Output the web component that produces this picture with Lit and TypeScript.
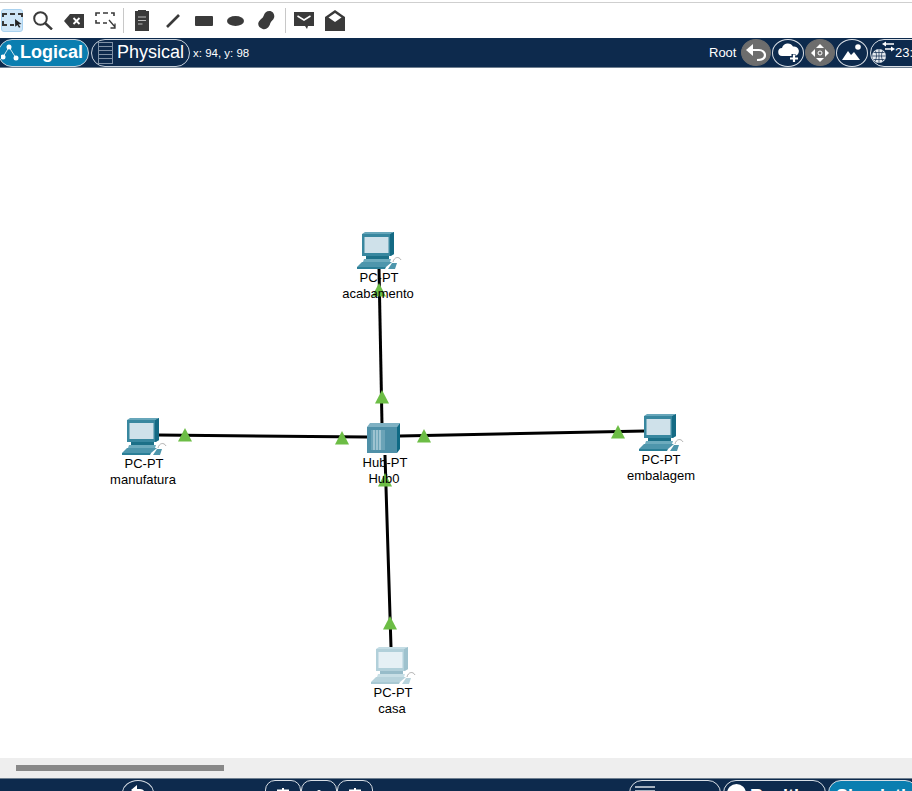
import { LitElement, html, css, svg } from "lit";
import { customElement } from "lit/decorators.js";

const INK = "#3a3a3a";

const pcIcon = (faded: boolean) => {
  const c = faded
    ? { top: "#c4dde5", side: "#9fc2ce", front: "#b2d0da", screen: "#e6f0f5", dark: "#97bcc9", base: "#c8dfe6", key: "#b7d3dc", line: "#a9c9d3" }
    : { top: "#67a6ba", side: "#146a84", front: "#38879f", screen: "#cfe1ea", dark: "#1c7088", base: "#6dabbd", key: "#4e96ac", line: "#2b7f97" };
  return svg`<svg class="pc" viewBox="0 0 45 37" width="45" height="37">
    <path d="M5 2 L33 2 L37 0 V22 L34 24 H5 Z" fill="${c.front}"/>
    <path d="M5 2 H33 L37 0 H8 Z" fill="${c.top}"/>
    <path d="M33 2 L37 0 V22 L33 24 Z" fill="${c.side}"/>
    <rect x="7.5" y="5" width="24" height="16" fill="${c.screen}"/>
    <path d="M9 24 H32 V27 H9 Z" fill="${c.dark}"/>
    <path d="M7 27 H34 L33 30 H6 Z" fill="${c.base}"/>
    <path d="M5 30 H35 L29 35 H0 Z" fill="${c.key}"/>
    <path d="M0 35 H29 L28 37 H0 Z" fill="${c.line}"/>
    <path d="M31 37 L35 31 H40 L38 37 Z" fill="${c.key}"/>
    <path d="M36 30 C37 25 42 24 44 28" fill="none" stroke="#a0a0a0" stroke-width=".8"/>
  </svg>`;
};

const hubIcon = svg`<svg class="hub" viewBox="0 0 33 30" width="33" height="30">
  <path d="M0 4 L3 0 H33 L30 4 Z" fill="#7fb1c3"/>
  <path d="M30 4 L33 0 V26 L30 30 Z" fill="#0f6a85"/>
  <rect x="0" y="4" width="30" height="26" fill="#4f90a8"/>
  <rect x="4" y="7" width="14" height="20" fill="#6ba3b7"/>
  <path d="M7 7 V27 M10 7 V27 M13 7 V27" stroke="#c5dde5" stroke-width="1.1"/>
</svg>`;

const links = [
  [379, 268, 382, 425],
  [158, 435, 367, 437],
  [645, 431, 400, 436],
  [385, 455, 391, 647],
];
const arrows = [
  [379, 290], [385, 480], [382, 397], [390, 623],
  [185, 435], [342, 438], [424, 436], [618, 432],
];

type Node = { x: number; y: number; a: string; b: string; ax: number; ay: number; bx: number; by: number; kind: string };
const nodes: Node[] = [
  { x: 357, y: 232, a: "PC-PT", b: "acabamento", ax: 379, ay: 278, bx: 378, by: 294, kind: "pc" },
  { x: 122, y: 418, a: "PC-PT", b: "manufatura", ax: 144, ay: 464, bx: 143, by: 480, kind: "pc" },
  { x: 639, y: 414, a: "PC-PT", b: "embalagem", ax: 661, ay: 460, bx: 661, by: 476, kind: "pc" },
  { x: 371, y: 647, a: "PC-PT", b: "casa", ax: 393, ay: 693, bx: 392, by: 709, kind: "faded" },
  { x: 367, y: 423, a: "Hub-PT", b: "Hub0", ax: 385, ay: 463, bx: 384, by: 479, kind: "hub" },
];

@customElement("app-root")
export class AppRoot extends LitElement {
  static styles = css`
    :host {
      display: flex;
      flex-direction: column;
      width: 912px;
      height: 791px;
      overflow: hidden;
      background: #fff;
      font-family: "Liberation Sans", Arial, sans-serif;
    }
    .toolbar {
      height: 36px;
      margin-top: 2px;
      border-top: 1px solid #cfcfcf;
      box-sizing: border-box;
      flex: none;
      display: flex;
      align-items: center;
      padding: 0 0 0 1px;
    }
    .tool {
      width: 22px;
      height: 23px;
      margin-right: 9px;
      display: flex;
      align-items: center;
      justify-content: center;
      border-radius: 3px;
      border: 1px solid transparent;
      box-sizing: border-box;
      flex: none;
    }
    .tool.on { background: #cfe6f8; border-color: #a9d2f0; }
    .tool svg { display: block; flex: none; }
    .sep { width: 1px; height: 25px; background: #c8c8c8; margin: 0 7px 0 -2px; flex: none; }
    .sep.second { margin-left: -1px; }
    .nav {
      flex: none;
      height: 30px;
      background: #0d2a4d;
      border-bottom: 1px solid #6f7f90;
      box-sizing: border-box;
      display: flex;
      align-items: center;
      color: #fff;
      white-space: nowrap;
      overflow: hidden;
    }
    .pill {
      height: 28px;
      border: 1px solid #c9d2dc;
      border-radius: 14px;
      box-sizing: border-box;
      display: flex;
      align-items: center;
      flex: none;
      font-size: 18px;
      color: #fff;
    }
    .logical {
      width: 91px;
      margin-left: -2px;
      background: #0a7eb0;
      font-weight: bold;
      padding-left: 2px;
      gap: 1px;
    }
    .physical { width: 99px; margin-left: 2px; padding-left: 6px; gap: 4px; }
    .coords { font-size: 11.5px; margin-left: 3px; }
    .right { margin-left: auto; display: flex; align-items: center; flex: none; width: 203px; }
    .root { font-size: 13px; width: 32px; flex: none; }
    .round {
      width: 32px;
      height: 28px;
      border-radius: 50%;
      border: 1px solid #d8dee5;
      box-sizing: border-box;
      display: flex;
      align-items: center;
      justify-content: center;
      flex: none;
      margin-right: 1px;
    }
    .round.grey { width: 30px; height: 27px; background: #6d6d6d; border-color: #6d6d6d; }
    .round.last { margin-right: 2px; }
    .net {
      width: 60px;
      height: 28px;
      border-radius: 14px;
      border: 1px solid #d8dee5;
      box-sizing: border-box;
      display: flex;
      align-items: center;
      padding-left: 1px;
      gap: 0;
      font-size: 13px;
      flex: none;
    }
    .canvas { flex: none; height: 690px; position: relative; background: #fff; overflow: hidden; }
    .links { position: absolute; inset: 0; }
    .node { position: absolute; display: block; }
    .label {
      position: absolute;
      transform: translate(-50%, -50%);
      font-size: 13px;
      line-height: 14px;
      color: #000;
      white-space: nowrap;
    }
    .scroll {
      flex: none;
      height: 20px;
      background: #eeeeee;
      display: flex;
      align-items: center;
      padding-left: 16px;
    }
    .thumb { width: 208px; height: 6px; background: #888; }
    .bottom {
      flex: 1;
      background: #0d2a4d;
      border-top: 1px solid #6f7f90;
      display: flex;
      align-items: flex-start;
      overflow: hidden;
      padding-top: 1px;
      box-sizing: border-box;
      color: #fff;
    }
    .bbtn {
      flex: none;
      height: 26px;
      border: 1px solid #d8dee5;
      box-sizing: border-box;
      display: flex;
      align-items: flex-start;
      justify-content: center;
      font-size: 18px;
      font-weight: bold;
      line-height: 21px;
    }
    .bbtn span.txt { margin-top: 2px; }
    .undo { width: 32px; border-radius: 50%; margin-left: 122px; padding-top: 4px; }
    .seg { width: 36px; border-radius: 10px; padding-top: 7px; }
    .seg.first { margin-left: 111px; }
    .tab { border-radius: 14px; justify-content: flex-start; }
    .t1 { width: 92px; margin-left: 256px; padding: 5px 0 0 5px; }
    .t2 { width: 103px; margin-left: 2px; padding: 3px 0 0 3px; gap: 4px; }
    .t3 { width: 90px; margin-left: 2px; padding: 3px 0 0 3px; gap: 4px; background: #0a7eb0; }
    .dot { width: 19px; height: 19px; border-radius: 50%; background: #fff; flex: none; }
  `;

  private tool(body: unknown, on = false) {
    return html`<div class="tool ${on ? "on" : ""}">${body}</div>`;
  }

  render() {
    return html`
      <div class="toolbar">
        ${this.tool(svg`<svg width="21" height="15" viewBox="0 0 21 15"><path d="M1 4V1H5M8 1H13M16 1H20V4M1 8V12H5M8 12H12" fill="none" stroke="${INK}" stroke-width="2"/><path d="M13 6l6.500 5-3 .5 2 2.500-1.500 .8-1.600-2.800-2.200 1.800z" fill="#222"/></svg>`, true)}
        ${this.tool(svg`<svg width="20" height="19" viewBox="0 0 20 19"><circle cx="7.500" cy="7.500" r="6.300" fill="none" stroke="${INK}" stroke-width="2"/><path d="M12 12L19 18.500" stroke="${INK}" stroke-width="2.400"/></svg>`)}
        ${this.tool(svg`<svg width="20" height="14" viewBox="0 0 20 14"><path d="M6 0h14v14H6L0 7z" fill="${INK}"/><path d="M9.500 4l6 6M15.500 4l-6 6" stroke="#fff" stroke-width="1.800"/></svg>`)}
        ${this.tool(svg`<svg width="21" height="17" viewBox="0 0 21 17"><path d="M1 4V1H5M8 1H13M16 1H19V4M1 8V11H5M8 11H12" fill="none" stroke="${INK}" stroke-width="1.600"/><path d="M14 8l6 7M20 11.500V16H15.500" fill="none" stroke="${INK}" stroke-width="1.300"/></svg>`)}
        <div class="sep"></div>
        ${this.tool(svg`<svg width="14" height="21" viewBox="0 0 14 21"><path d="M0 1h3V0h8v1h3v20H0z" fill="${INK}"/><path d="M3 7h8M3 10.500h8M3 14h4.500" stroke="#bbb" stroke-width="1.200"/></svg>`)}
        ${this.tool(svg`<svg width="14" height="14" viewBox="0 0 14 14"><path d="M1 13L13 1" stroke="${INK}" stroke-width="2.600"/></svg>`)}
        ${this.tool(svg`<svg width="18" height="10" viewBox="0 0 18 10"><rect width="18" height="10" rx="1" fill="${INK}"/></svg>`)}
        ${this.tool(svg`<svg width="17" height="10" viewBox="0 0 17 10"><ellipse cx="8.500" cy="5" rx="8.500" ry="5" fill="${INK}"/></svg>`)}
        ${this.tool(svg`<svg width="17" height="19" viewBox="0 0 18 20"><path d="M12 0c4 0 6 4 5 7-1 3-3 3-4 6-1 4-4 7-8 6-4-1-6-5-4-8 2-3 4-3 5-6 1-3 3-5 6-5z" fill="${INK}"/></svg>`)}
        <div class="sep second"></div>
        ${this.tool(svg`<svg width="20" height="17" viewBox="0 0 20 17"><path d="M0 0h20v14h-6l-1 3-2-3H0z" fill="${INK}"/><path d="M3.500 4l6.500 4 6.500-4" fill="none" stroke="#fff" stroke-width="1.500"/></svg>`)}
        ${this.tool(svg`<svg width="20" height="21" viewBox="0 0 20 21"><path d="M0 7L10 0l10 7v14H0z" fill="${INK}"/><path d="M3.500 7.500L10 12l6.500-4.500L10 3z" fill="#fff"/></svg>`)}
      </div>

      <div class="nav">
        <div class="pill logical">
          <svg width="18" height="20" viewBox="0 0 18 20"><path d="M2 14L8 4l7 11" fill="none" stroke="#fff" stroke-width=".8"/><circle cx="2" cy="14" r="2.500" fill="#fff"/><circle cx="8" cy="4" r="2.500" fill="#fff"/><circle cx="15" cy="15" r="2.500" fill="#fff"/></svg>
          <span>Logical</span>
        </div>
        <div class="pill physical">
          <svg width="15" height="22" viewBox="0 0 15 22"><rect x=".5" y=".5" width="14" height="21" fill="none" stroke="#7f91a6"/><path d="M1 4.500h13M1 8.500h13M1 12.500h13M1 16.500h13" stroke="#7f91a6"/></svg>
          <span>Physical</span>
        </div>
        <span class="coords">x: 94, y: 98</span>
        <div class="right">
          <span class="root">Root</span>
          <div class="round grey"><svg width="20" height="17" viewBox="0 0 20 17"><path d="M0 6L7 0V12z" fill="#fff"/><path d="M6 6H13C17 6 19 9 19 11C19 14.500 16 16 11 16" fill="none" stroke="#fff" stroke-width="2.200"/></svg></div>
          <div class="round"><svg width="21" height="19" viewBox="0 0 21 19"><path d="M4.500 13a4 4 0 0 1-.5-8 6 6 0 0 1 11-1.500 4.500 4.500 0 0 1 2 9.500z" fill="#fff"/><path d="M11 15.500h9M15.500 11v8" stroke="#0d2a4d" stroke-width="4"/><path d="M12 15.500h8M16 11.500v8" stroke="#fff" stroke-width="2.200"/></svg></div>
          <div class="round grey"><svg width="20" height="20" viewBox="0 0 20 20" fill="#fff"><path d="M10 1l4 4H6zM10 19l-4-4h8zM1 10l4-4v8zM19 10l-4 4V6z"/><circle cx="10" cy="10" r="2" fill="none" stroke="#fff" stroke-width="1"/></svg></div>
          <div class="round last"><svg width="20" height="17" viewBox="0 0 20 17" fill="#fff"><path d="M0 16l6-9 3 4 3-3 6 8z"/><circle cx="16" cy="3" r="2.800"/></svg></div>
          <div class="net">
            <svg width="23" height="23" viewBox="0 0 23 23"><circle cx="7" cy="15" r="7" fill="#e3e8ee"/><path d="M0 15h14M7 8v14M3 9.500c2 3 2 7 0 11M11 9.500c-2 3-2 7 0 11M1.500 11.500h11M1.500 18.500h11" stroke="#0d2a4d" stroke-width=".7" fill="none"/><path d="M22 3H13" stroke="#fff" stroke-width="1.500"/><path d="M10 3l4-2.500v5z" fill="#fff"/><path d="M13 8h6" stroke="#fff" stroke-width="1.500"/><path d="M23 8l-4-2.500v5z" fill="#fff"/></svg>
            <span>23:</span>
          </div>
        </div>
      </div>

      <div class="canvas">
        <svg class="links" width="912" height="690" viewBox="0 68 912 690">
          ${links.map(([x1, y1, x2, y2]) => svg`<line x1=${x1} y1=${y1} x2=${x2} y2=${y2} stroke="#000" stroke-width="3"/>`)}
          ${arrows.map(([x, y]) => svg`<path d="M${x} ${y - 7}l7 13.500h-14z" fill="#6cbd45"/>`)}
        </svg>
        ${nodes.map((n) => html`
          <div class="node" style="left:${n.x}px;top:${n.y - 68}px">
            ${n.kind === "hub" ? hubIcon : pcIcon(n.kind === "faded")}
          </div>
          <span class="label" style="left:${n.ax}px;top:${n.ay - 68}px">${n.a}</span>
          <span class="label" style="left:${n.bx}px;top:${n.by - 68}px">${n.b}</span>
        `)}
      </div>

      <div class="scroll"><div class="thumb"></div></div>

      <div class="bottom">
        <div class="bbtn undo"><svg width="16" height="14" viewBox="0 0 16 14"><path d="M7 0L1 5l6 5V7h3c2 0 3 1 3 3l2-1c0-3-2-5-5-5H7z" fill="#fff"/></svg></div>
        <div class="bbtn seg first"><svg width="16" height="6" viewBox="0 0 16 6"><path d="M8 0v6M2 2.500h12" stroke="#fff" stroke-width="2"/></svg></div>
        <div class="bbtn seg"><svg width="6" height="6" viewBox="0 0 6 6"><circle cx="3" cy="4" r="2" fill="#fff"/></svg></div>
        <div class="bbtn seg"><svg width="16" height="6" viewBox="0 0 16 6"><path d="M8 0v6M2 2.500h12" stroke="#fff" stroke-width="2"/></svg></div>
        <div class="bbtn tab t1"><svg width="20" height="8" viewBox="0 0 20 8"><path d="M0 1h20M0 5h20" stroke="#d8dee5" stroke-width="1.500"/></svg></div>
        <div class="bbtn tab t2"><span class="dot"></span><span class="txt">Realtime</span></div>
        <div class="bbtn tab t3"><svg width="22" height="20" viewBox="0 0 22 20"><path d="M11 1l10 9H1z" fill="#fff"/></svg><span class="txt">Simulation</span></div>
      </div>
    `;
  }
}
